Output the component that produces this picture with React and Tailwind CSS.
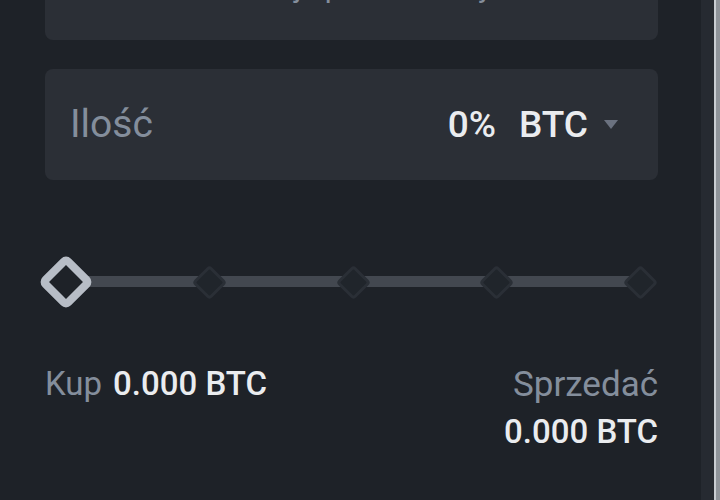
import React from "react";

const ticks = [1, 2, 3, 4];

function Diamond({ active }) {
    if (active) {
        return (
            <div className="w-[40px] h-[40px] rotate-45 rounded-[7px] border-[8px] border-[#b7bdc6] bg-[#1e2228] shrink-0" />
        );
    }
    return (
        <div className="w-[25px] h-[25px] rotate-45 rounded-[4px] border-[3px] border-[#2a2f36] bg-[#20252b] shrink-0" />
    );
}

export default function App() {
    return (
        <div className="h-[500px] w-[720px] overflow-hidden bg-[#1e2228] flex font-['Roboto',sans-serif]">
            {/* Order form */}
            <div className="w-[701px] shrink-0 pl-[45px] pr-[43px] flex flex-col">

                {/* Price field (mostly scrolled off) */}
                <div className="h-[106px] -mt-[66px] rounded-[8px] bg-[#2b2f36] flex items-center justify-end pr-[78px] shrink-0">
                    <span className="text-[30px] leading-none text-[#848e9c]">Najlepsza cena rynkowa</span>
                </div>

                {/* Amount field */}
                <div className="mt-[29px] h-[111px] rounded-[8px] bg-[#2b2f36] flex items-center justify-between pl-[25px] pr-[40px] shrink-0">
                    <span className="text-[39px] leading-none text-[#848e9c]">Ilość</span>
                    <div className="flex items-center">
                        <span className="text-[37px] leading-none text-[#eaecef] font-medium">0%</span>
                        <span className="ml-[23px] text-[37px] leading-none text-[#eaecef] font-medium">BTC</span>
                        <svg className="ml-[16px]" width="14" height="9" viewBox="0 0 14 9">
                            <path d="M0 0 H14 L7 9 Z" fill="#6b7280" />
                        </svg>
                    </div>
                </div>

                {/* Slider */}
                <div className="relative mt-[74px] h-[56px] pl-[21px] pr-[18px] flex items-center shrink-0">
                    <div className="absolute left-[21px] right-[18px] top-[22px] h-[11px] bg-[#434850]" />
                    <div className="relative w-full flex items-center justify-between">
                        <div className="w-0 flex justify-center"><Diamond active /></div>
                        {ticks.map((t) => (
                            <div key={t} className="w-0 flex justify-center"><Diamond /></div>
                        ))}
                    </div>
                </div>

                {/* Totals */}
                <div className="mt-[57px] flex justify-between items-start">
                    <div className="flex items-baseline gap-[11px]">
                        <span className="text-[33px] leading-none text-[#848e9c]">Kup</span>
                        <span className="text-[33px] leading-none text-[#eaecef] font-medium">0.000 BTC</span>
                    </div>
                    <div className="flex flex-col items-end gap-[13px]">
                        <span className="text-[35px] leading-none text-[#848e9c]">Sprzedać</span>
                        <span className="text-[33px] leading-none text-[#eaecef] font-medium">0.000 BTC</span>
                    </div>
                </div>
            </div>

            {/* Panel edge */}
            <div className="w-[13px] shrink-0 bg-[#262a31]" />
            <div className="w-[2px] shrink-0 bg-[#c9cdd2]" />
            <div className="flex-1 bg-[#8e9399]" />
        </div>
    );
}
